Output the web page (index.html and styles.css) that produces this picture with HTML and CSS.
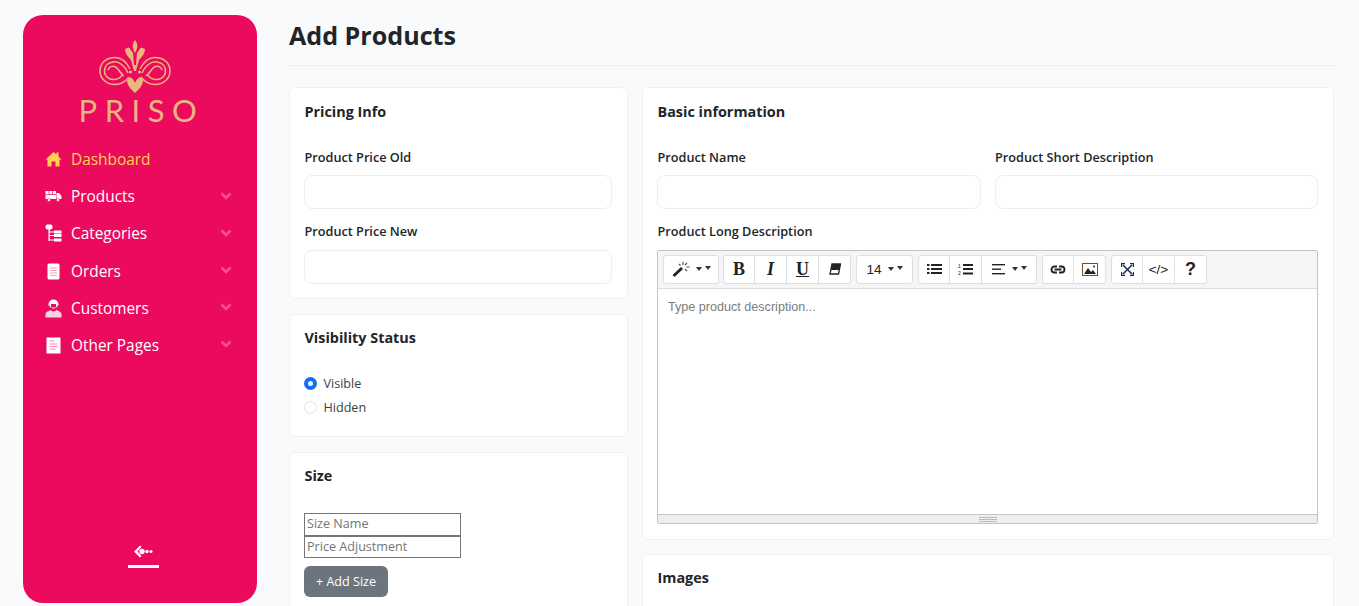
FILE: index.html
```html
<!DOCTYPE html>
<html>
<head>
<meta charset="utf-8">
<title>Add Products</title>
<link rel="stylesheet" href="styles.css">
</head>
<body>
<div class="app">
	<aside class="sidebar">
		<div class="logo">
			<svg class="logo-mark" width="72" height="54" viewBox="0 0 72 54" fill="none" stroke="#e9b97c" stroke-width="1.500">
				<path d="M36 0C38.500 3 39 6 37.500 10L36 13L34.500 10C33 6 33.500 3 36 0Z" fill="#e9b97c" stroke="none"/>
				<path d="M26 9L30 7.500L34 13L35 25L37 25L38 13L42 7.500L46 9C46 13 43 17 40 20L37 31L35 31L32 20C29 17 26 13 26 9Z" fill="#e9b97c" stroke="none"/>
				<path d="M31 29C27 21 21 17 15 17.500C6 18 1 24 1 31C1 39 8 44.500 16 44.500C22 44.500 27 41 30 37"/>
				<path d="M29 33C26 26 20 21 14 22C8 23 5 27 5.500 32C6 37 11 40 16 39.500C20 39 22 37 23 35"/>
				<path d="M9 30C10 26 15 25 18 28C20 30 21 33 25 36"/>
				<g transform="translate(72,0) scale(-1,1)">
					<path d="M31 29C27 21 21 17 15 17.500C6 18 1 24 1 31C1 39 8 44.500 16 44.500C22 44.500 27 41 30 37"/>
					<path d="M29 33C26 26 20 21 14 22C8 23 5 27 5.500 32C6 37 11 40 16 39.500C20 39 22 37 23 35"/>
					<path d="M9 30C10 26 15 25 18 28C20 30 21 33 25 36"/>
				</g>
				<circle cx="31.500" cy="32" r="1.500" fill="#e9b97c" stroke="none"/>
				<circle cx="40.500" cy="32" r="1.500" fill="#e9b97c" stroke="none"/>
				<path d="M36 53C33 50 28 46 28 40L31 37C33 38 35 40 36 43C37 40 39 38 41 37L44 40C44 46 39 50 36 53Z" fill="#e9b97c" stroke="none"/>
			</svg>
			<div class="logo-text">PRISO</div>
		</div>
		<nav class="menu">
			<a class="menu-item active" href="#">
				<svg class="menu-icon" width="17" height="17" viewBox="0 0 17 17"><path d="M8.500 1L0.500 8.500L2.500 8.500L2.500 15.500L6.500 15.500L6.500 10.500L10.500 10.500L10.500 15.500L14.500 15.500L14.500 8.500L16.500 8.500L13.500 5.500L13.500 1.500L11.500 1.500L11.500 3.500Z" fill="#ffd34e"/></svg>
				<span>Dashboard</span>
			</a>
			<a class="menu-item" href="#">
				<svg class="menu-icon" width="17" height="17" viewBox="0 0 17 17" fill="#fff"><rect x="0.500" y="3" width="10.500" height="8"/><path d="M11.500 5L14 5L16.500 8L16.500 11L11.500 11Z"/><path d="M0.500 6.500h10.500M4 3v3.500M7.500 3v3.500" stroke="#ec0a5f" stroke-width=".7"/><circle cx="4" cy="12" r="1.500" stroke="#ec0a5f" stroke-width=".5"/><circle cx="13" cy="12" r="1.500" stroke="#ec0a5f" stroke-width=".5"/></svg>
				<span>Products</span>
				<svg class="menu-arrow" width="14" height="14" viewBox="0 0 14 14"><path d="M2.500 4.500L7 9L11.500 4.500" fill="none" stroke="#f4528f" stroke-width="2.600"/></svg>
			</a>
			<a class="menu-item" href="#">
				<svg class="menu-icon" width="17" height="19" viewBox="0 0 17 19" fill="#fff"><rect x="0.500" y="0.500" width="7" height="5" rx="2"/><rect x="3.500" y="5" width="1.300" height="12"/><rect x="4" y="7.500" width="5" height="1"/><rect x="4" y="11" width="5" height="1"/><rect x="4" y="15.500" width="5" height="1"/><rect x="9" y="6.500" width="7.500" height="3"/><rect x="9" y="10" width="7.500" height="3"/><rect x="9" y="14.500" width="7.500" height="3"/></svg>
				<span>Categories</span>
				<svg class="menu-arrow" width="14" height="14" viewBox="0 0 14 14"><path d="M2.500 4.500L7 9L11.500 4.500" fill="none" stroke="#f4528f" stroke-width="2.600"/></svg>
			</a>
			<a class="menu-item" href="#">
				<svg class="menu-icon" width="17" height="17" viewBox="0 0 17 17"><rect x="2.500" y="0.500" width="12" height="16" rx="1.500" fill="#fff"/><path d="M5 5h7M5 7.500h7M5 10h7M5 12.500h7" stroke="#f7a0c0" stroke-width="1.100"/></svg>
				<span>Orders</span>
				<svg class="menu-arrow" width="14" height="14" viewBox="0 0 14 14"><path d="M2.500 4.500L7 9L11.500 4.500" fill="none" stroke="#f4528f" stroke-width="2.600"/></svg>
			</a>
			<a class="menu-item" href="#">
				<svg class="menu-icon" width="17" height="19" viewBox="0 0 17 19"><path d="M0.500 18.500L0.500 15C0.500 13 3 12 6 11L11 11C14 12 16.500 13 16.500 15L16.500 18.500Z" fill="#fbd2e1"/><circle cx="8.500" cy="5.500" r="5" fill="#fff"/><path d="M4 5.500C5 8 6 9.500 8.500 9.500C11 9.500 12 8 13 5.500L13 8C12 11 10 12.500 8.500 12.500C7 12.500 5 11 4 8Z" fill="#ec0a5f"/><path d="M6 5L11 5L11 8.500L6 8.500Z" fill="#ec0a5f"/></svg>
				<span>Customers</span>
				<svg class="menu-arrow" width="14" height="14" viewBox="0 0 14 14"><path d="M2.500 4.500L7 9L11.500 4.500" fill="none" stroke="#f4528f" stroke-width="2.600"/></svg>
			</a>
			<a class="menu-item" href="#">
				<svg class="menu-icon" width="17" height="17" viewBox="0 0 17 17"><rect x="1.500" y="0.500" width="14" height="16" fill="#fff"/><path d="M4.500 4h5M4.500 7h8M4.500 9.500h8M4.500 12h6" stroke="#f58ab2" stroke-width="1.100"/></svg>
				<span>Other Pages</span>
				<svg class="menu-arrow" width="14" height="14" viewBox="0 0 14 14"><path d="M2.500 4.500L7 9L11.500 4.500" fill="none" stroke="#f4528f" stroke-width="2.600"/></svg>
			</a>
		</nav>
		<div class="collapse">
			<svg width="20" height="13" viewBox="0 0 20 13" fill="#fff"><path d="M6 0.500L0 6.500L6 12.500L7.500 11L3.500 6.500L7.500 2Z"/><circle cx="8" cy="6.500" r="2.700"/><circle cx="13" cy="6.500" r="1.700"/><circle cx="17" cy="6.500" r="1.500"/></svg>
			<div class="collapse-line"></div>
		</div>
	</aside>

	<main class="content">
		<h1 class="page-title">Add Products</h1>
		<div class="columns">
			<div class="col">
				<section class="card">
					<h2>Pricing Info</h2>
					<label>Product Price Old</label>
					<input class="field" type="text">
					<label class="next">Product Price New</label>
					<input class="field" type="text">
				</section>
				<section class="card tight loose">
					<h2>Visibility Status</h2>
					<div class="radio first"><span class="dot on"></span>Visible</div>
					<div class="radio"><span class="dot"></span>Hidden</div>
				</section>
				<section class="card tight">
					<h2>Size</h2>
					<input class="plain first" type="text" placeholder="Size Name">
					<input class="plain" type="text" placeholder="Price Adjustment">
					<button class="btn-add">+ Add Size</button>
				</section>
			</div>
			<div class="col col-right">
				<section class="card">
					<h2>Basic information</h2>
					<div class="two">
						<div>
							<label>Product Name</label>
							<input class="field" type="text">
						</div>
						<div>
							<label>Product Short Description</label>
							<input class="field" type="text">
						</div>
					</div>
					<label class="next">Product Long Description</label>
					<div class="editor">
						<div class="toolbar">
							<div class="group g-first">
								<button class="tool w56">
									<svg width="18" height="16" viewBox="0 0 18 16"><path d="M0.500 14L9 6L11 8L2.500 16Z" fill="#222"/><path d="M11 1v3M14.500 6h3M7 3l1.500 1.500M15 2l-2 2M15 10l-2-2" stroke="#555" stroke-width="1.200"/></svg>
									<i class="caret"></i><i class="caret up"></i>
								</button>
							</div>
							<div class="group">
								<button class="tool"><b class="ser">B</b></button>
								<button class="tool"><b class="ser it">I</b></button>
								<button class="tool"><b class="ser und">U</b></button>
								<button class="tool">
									<svg width="12" height="12" viewBox="0 0 12 12"><path d="M3 1L11.500 1L9.500 11L1 11Z" fill="#fff" stroke="#222" stroke-width="1.300"/><path d="M3 1L11.500 1L10.500 7L2 7Z" fill="#222"/></svg>
								</button>
							</div>
							<div class="group">
								<button class="tool w57"><span class="num">14</span><i class="caret"></i><i class="caret up"></i></button>
							</div>
							<div class="group">
								<button class="tool">
									<svg width="15" height="12" viewBox="0 0 15 12" fill="#222"><rect x="0" y="1" width="2.500" height="2"/><rect x="0" y="5" width="2.500" height="2"/><rect x="0" y="9" width="2.500" height="2"/><rect x="4" y="1" width="11" height="2"/><rect x="4" y="5" width="11" height="2"/><rect x="4" y="9" width="11" height="2"/></svg>
								</button>
								<button class="tool">
									<svg width="15" height="13" viewBox="0 0 15 13" fill="#222"><rect x="5" y="1" width="10" height="2"/><rect x="5" y="5" width="10" height="2"/><rect x="5" y="9.500" width="10" height="2"/><text x="0" y="5" font-size="5" font-family="Liberation Sans">1</text><text x="0" y="12" font-size="5" font-family="Liberation Sans">2</text></svg>
								</button>
								<button class="tool w55">
									<svg width="13" height="11" viewBox="0 0 13 11" fill="#222"><rect y="0" width="13" height="1.400"/><rect y="4.500" width="9" height="1.400"/><rect y="9" width="13" height="1.400"/></svg>
									<i class="caret gap"></i><i class="caret up"></i>
								</button>
							</div>
							<div class="group">
								<button class="tool">
									<svg width="16" height="9" viewBox="0 0 16 9" fill="none" stroke="#222" stroke-width="1.800"><path d="M7 1.500H4.500a3 3 0 0 0 0 6H7M9 1.500h2.500a3 3 0 0 1 0 6H9M4.500 4.500h7"/></svg>
								</button>
								<button class="tool">
									<svg width="16" height="13" viewBox="0 0 16 13"><rect x="0.500" y="0.500" width="15" height="12" fill="#fff" stroke="#7a4a20"/><path d="M2 11L6 5L9 9L11 7L14 11Z" fill="#222"/><circle cx="12" cy="3.500" r="1" fill="#222"/></svg>
								</button>
							</div>
							<div class="group">
								<button class="tool">
									<svg width="13" height="13" viewBox="0 0 13 13" fill="none" stroke="#1c2c50" stroke-width="1.500"><path d="M2 2L11 11M11 2L2 11"/><path d="M0.500 4V0.500H4M9 0.500h3.500V4M12.500 9v3.500H9M4 12.500H0.500V9" stroke-width="1.300"/></svg>
								</button>
								<button class="tool"><span class="code">&lt;/&gt;</span></button>
								<button class="tool"><b class="help">?</b></button>
							</div>
						</div>
						<div class="editable">Type product description...</div>
						<div class="resize"><i></i><i></i><i></i></div>
					</div>
				</section>
				<section class="card tight">
					<h2>Images</h2>
				</section>
			</div>
		</div>
	</main>
</div>
</body>
</html>
```

FILE: styles.css
```css
* { box-sizing: border-box; }
html, body { margin: 0; padding: 0; height: 100%; overflow: hidden; }
body { background-color: #f9fafc; color: #212529; font-family: "Open Sans", "Noto Sans", sans-serif; font-size: 13px; }
.app { display: flex; align-items: flex-start; height: 606px; overflow: hidden; padding: 15px 25px 0 23px; }

/* sidebar */
.sidebar { display: flex; flex-direction: column; flex: none; width: 234px; height: 588px; background-color: #ec0a5f; border-radius: 20px; }
.logo { display: flex; flex-direction: column; align-items: center; padding-top: 25px; height: 125.900px; }
.logo-mark { display: block; margin-left: -11px; }
.logo-text { margin: 0 0 0 3px; color: #e8b680; font-family: "Lato", sans-serif; font-weight: 400; font-size: 31px; line-height: 32px; letter-spacing: 7.500px; }
.menu { display: flex; flex-direction: column; padding: 0 0 0 22px; }
.menu-item { display: flex; align-items: center; height: 37.200px; color: #fff; text-decoration: none; font-size: 15.400px; font-weight: 500; }
.menu-item.active { color: #ffd34e; }
.menu-icon { flex: none; margin-right: 9px; }
.menu-item span { flex: 1; }
.menu-arrow { flex: none; margin-right: 24px; margin-top: -2px; }
.collapse { display: flex; flex-direction: column; align-items: center; margin-top: auto; padding: 0 0 35px 7px; }
.collapse svg { display: block; }
.collapse-line { width: 31px; height: 3px; margin-top: 7px; background-color: #fff; }

/* main */
.content { flex: 1; margin-left: 32px; min-width: 0; }
.page-title { margin: 0 0 21px; height: 51px; border-bottom: 1px solid #eceef2; font-size: 25.100px; line-height: 40px; font-weight: 700; color: #212529; }
.columns { display: grid; grid-template-columns: 339px 692px; gap: 14px; }
.col { display: flex; flex-direction: column; gap: 15px; }
.col-right { gap: 14.500px; }
.card { padding: 14px 15px 14px 14px; background-color: #fff; border: 1px solid #f0f1f4; border-radius: 6px; }
.col-right .card:first-child { padding-bottom: 15px; }
.card.tight { padding-top: 13px; }
.card.loose { padding-bottom: 16px; }
.card h2 { margin: 0 0 25px; padding-left: 0.500px; font-size: 14.400px; line-height: 20px; font-weight: 700; }
label { display: block; margin-bottom: 8.400px; padding-left: 0.500px; font-size: 12.700px; line-height: 20px; font-weight: 600; }
label.next { margin-top: 11.500px; margin-bottom: 9px; }
.field { display: block; width: 100%; height: 34px; padding: 0 12px; background-color: #fff; border: 1px solid #eceef2; border-radius: 8px; outline: none; }
.two { display: grid; grid-template-columns: 1fr 1fr; gap: 14px; }

.radio { display: flex; align-items: center; height: 24px; font-size: 12.600px; color: #3a3f45; }
.radio.first { margin-top: -1px; }
.dot { width: 13px; height: 13px; margin-right: 6.500px; border: 1px solid #dfe2e6; border-radius: 50%; background-color: #fff; }
.dot.on { border: 4px solid #0d6efd; }

.plain { display: block; width: 157px; height: 22.500px; padding: 0 2px 1px; border: 1px solid #767676; font-family: inherit; font-size: 12.600px; outline: none; }
.plain::placeholder { color: #757575; }
.plain.first { height: 23px; margin-top: 27px; }
.btn-add { display: block; width: 84px; height: 31px; margin-top: 7.500px; padding: 0; border: none; border-radius: 6px; background-color: #6c757d; color: #fff; font-family: inherit; font-size: 12.600px; }

/* editor */
.editor { border: 1px solid #c4c4c4; border-radius: 2px; }
.toolbar { display: flex; gap: 5px; height: 38px; padding: 4px 5px; background-color: #f5f5f5; border-bottom: 1px solid #ddd; }
.group { display: flex; }
.g-first { margin-right: -1px; }
.tool { display: flex; align-items: center; justify-content: center; width: 32px; height: 29px; padding: 0; background-color: #fff; border: 1px solid #dae0e5; border-left: none; font-family: "Liberation Sans", sans-serif; color: #222; }
.group .tool:first-child { border-left: 1px solid #dae0e5; border-radius: 3px 0 0 3px; }
.group .tool:last-child { border-radius: 0 3px 3px 0; }
.group .tool:only-child { border-radius: 3px; }
.w56 { width: 56px; }
.w57 { width: 57px; }
.w55 { width: 55px; }
.caret { width: 0; height: 0; margin-left: 3px; border-left: 3px solid transparent; border-right: 3px solid transparent; border-top: 4px solid #333; }
.caret.up { margin-top: -3px; }
.w56 .caret:first-of-type, .w57 .caret:first-of-type { margin-left: 6px; }
.caret.gap { margin-left: 7px; }
.ser { font-family: "Liberation Serif", serif; font-size: 18px; }
.it { font-style: italic; }
.und { text-decoration: underline; }
.num { font-size: 13.500px; }
.code { font-size: 13.500px; }
.help { font-size: 18px; }
.editable { height: 225px; padding: 10px; font-family: "Liberation Sans", sans-serif; font-size: 12.600px; line-height: 16px; color: #7c7c7c; background-color: #fff; }
.resize { display: flex; flex-direction: column; align-items: center; gap: 1px; height: 9px; padding-top: 2px; background-color: #eee; border-top: 1px solid #c4c4c4; }
.resize i { display: block; flex: none; width: 18px; height: 1px; background-color: #bbb; }
```
